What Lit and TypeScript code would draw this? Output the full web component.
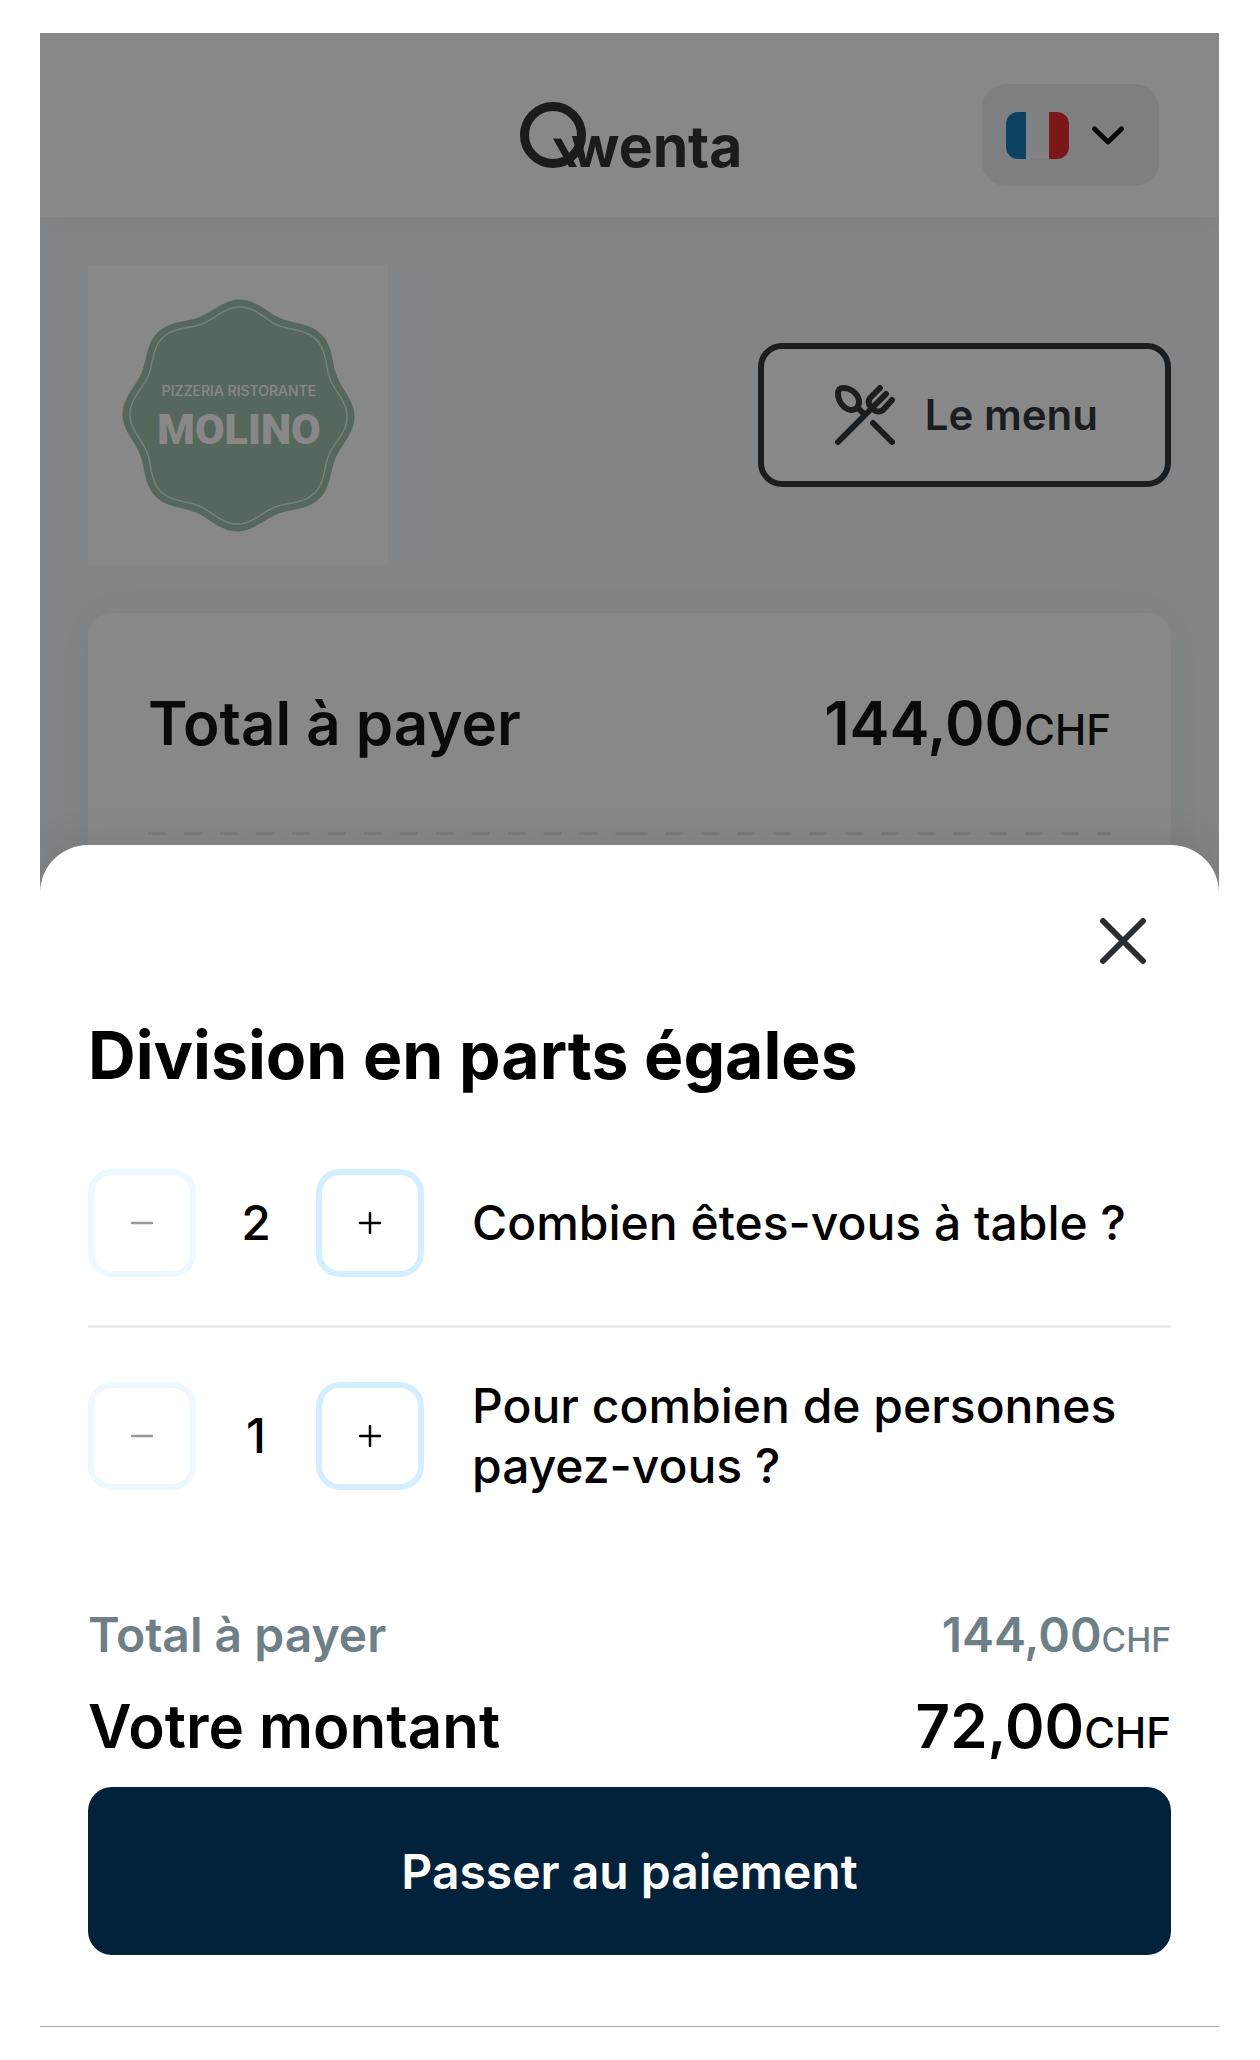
import { LitElement, html, css, svg } from "lit";
import { customElement, property, state } from "lit/decorators.js";

const formatAmount = (value: number) => value.toFixed(2).replace(".", ",");

/** Closed outline of an eight-lobed seal centred on (cx, cy). */
function sealPath(cx: number, cy: number, mean: number, wave: number): string {
  const points: string[] = [];
  for (let deg = 0; deg < 360; deg += 2) {
    const a = (deg * Math.PI) / 180;
    const r = mean + wave * Math.cos(8 * (a - 0.015));
    points.push(`${(cx + r * Math.cos(a)).toFixed(2)} ${(cy + r * Math.sin(a)).toFixed(2)}`);
  }
  return `M${points.join("L")}Z`;
}

@customElement("price-tag")
class PriceTag extends LitElement {
  @property({ type: Number }) amount = 0;

  static styles = css`
    :host { display: inline-block; white-space: nowrap; }
    .currency { font-size: 0.7em; line-height: 1; font-weight: 500; }
  `;

  render() {
    return html`${formatAmount(this.amount)}<span class="currency">CHF</span>`;
  }
}

@customElement("count-stepper")
class CountStepper extends LitElement {
  @property({ type: Number }) value = 1;
  @property({ type: Number }) min = 1;
  @property() label = "";

  static styles = css`
    :host { display: block; }
    .row { display: flex; align-items: center; gap: 48px; }
    .controls { display: flex; align-items: center; flex: none; }
    .step {
      box-sizing: border-box;
      width: 108px;
      height: 108px;
      padding: 0;
      display: grid;
      place-items: center;
      background: #fff;
      border: 6px solid #d3efff;
      border-radius: 24px;
      color: #000;
      cursor: pointer;
    }
    .step:disabled { opacity: 0.4; cursor: default; }
    .count { width: 120px; text-align: center; font-size: 48px; line-height: 60px; }
    .label { flex: 1; font-size: 48px; line-height: 60px; }
  `;

  private change(delta: number) {
    this.dispatchEvent(new CustomEvent("count-change", { detail: this.value + delta }));
  }

  render() {
    return html`
      <div class="row" role="group" aria-labelledby="label">
        <div class="controls">
          <button class="step" aria-label="Moins" ?disabled=${this.value <= this.min} @click=${() => this.change(-1)}>
            <svg width="24" height="24" viewBox="0 0 24 24" fill="none" stroke="currentColor" stroke-width="2.5" stroke-linecap="round"><path d="M2 12H22" /></svg>
          </button>
          <output class="count">${this.value}</output>
          <button class="step" aria-label="Plus" @click=${() => this.change(1)}>
            <svg width="24" height="24" viewBox="0 0 24 24" fill="none" stroke="currentColor" stroke-width="2.5" stroke-linecap="round"><path d="M2 12H22M12 2V22" /></svg>
          </button>
        </div>
        <span class="label" id="label">${this.label}</span>
      </div>
    `;
  }
}

@customElement("app-root")
class AppRoot extends LitElement {
  @state() private total = 144;
  @state() private guests = 2;
  @state() private paying = 1;

  static styles = css`
    :host {
      display: block;
      padding: 33px 41px 33px 40px;
      background: #fff;
      color: #000;
      font-family: Inter, "Liberation Sans", sans-serif;
      font-weight: 500;
    }
    button { font: inherit; }
    .page { position: relative; background: #f1f9fd; overflow: hidden; }
    .veil { position: absolute; inset: 0; background: rgba(19, 19, 19, 0.506); }
    .header {
      display: grid;
      grid-template-columns: 1fr auto 1fr;
      align-items: center;
      padding: 51px 60px 31px;
      background: #fff;
      box-shadow: 0 6px 24px rgba(20, 50, 70, 0.03);
    }
    .brand { grid-column: 2; display: block; }
    .language {
      justify-self: end;
      display: flex;
      align-items: center;
      gap: 20px;
      height: 102px;
      padding: 0 32px 0 24px;
      background: #e9edf1;
      border: 0;
      border-radius: 24px;
      color: #000;
    }
    .icon { display: block; flex: none; }
    .content { display: grid; gap: 48px; padding: 48px 48px 0; }
    .venue { display: flex; align-items: center; justify-content: space-between; }
    .badge { display: block; background: #fff; }
    .menu {
      box-sizing: border-box;
      display: flex;
      align-items: center;
      gap: 30px;
      height: 144px;
      padding: 0 67px 0 71px;
      background: #fff;
      border: 6px solid #22292d;
      border-radius: 24px;
      color: #22292d;
      font-size: 42px;
      line-height: 54px;
      font-weight: 600;
      text-decoration: none;
    }
    .bill {
      padding: 71px 60px 72px;
      background: #fff;
      border-radius: 24px 24px 0 0;
      box-shadow: 0 0 48px rgba(20, 60, 90, 0.05);
    }
    .line { display: flex; justify-content: space-between; align-items: baseline; }
    .large { font-size: 60px; line-height: 72px; font-weight: 600; }
    .muted { font-size: 48px; line-height: 60px; font-weight: 600; color: #6f7f87; }
    .bill .large { line-height: 78px; }
    .dashes {
      height: 3px;
      margin-top: 70px;
      background: repeating-linear-gradient(90deg, #e2e9ec 0 18px, transparent 18px 36px) 0 0 / 50% 100%;
    }
    .sheet {
      position: relative;
      display: flex;
      flex-direction: column;
      margin-top: -62px;
      padding: 48px 48px 71px;
      background: #fff;
      border-bottom: 1px solid #acacac;
      border-radius: 48px 48px 0 0;
      box-shadow: 0 -8px 36px rgba(0, 10, 20, 0.08);
      clip-path: inset(-60px 0 0 0);
    }
    .close {
      align-self: flex-end;
      display: grid;
      place-items: center;
      width: 96px;
      height: 96px;
      padding: 0;
      background: none;
      border: 0;
      color: #2a2e30;
      cursor: pointer;
    }
    .title { margin: 24px 0 72px; font-size: 66px; line-height: 84px; font-weight: 700; }
    .divider { width: 100%; box-sizing: border-box; margin: 48px 0; border: 0; border-top: 3px solid #ebebeb; }
    .totals { display: grid; gap: 25px; margin: 109px 0 25px; }
    .pay {
      height: 168px;
      padding: 0 48px;
      background: #02223b;
      border: 0;
      border-radius: 24px;
      color: #fff;
      font-size: 48px;
      font-weight: 600;
      cursor: pointer;
    }
    .brand-text { font: 700 57px Inter, sans-serif; fill: #242424; }
    .seal-small { font: 500 14px Inter, sans-serif; fill: #fff; }
    .seal-name { font: 900 43px Roboto, sans-serif; fill: #fff; }
  `;

  private setGuests(value: number) {
    this.guests = value;
    this.paying = Math.min(this.paying, value);
  }

  private brand() {
    return html`<svg class="brand" width="232" height="102" viewBox="-6 -17 232 102" role="img" aria-label="Qwenta">
      <circle cx="33" cy="34" r="28.5" fill="none" stroke="#242424" stroke-width="9" />
      <path d="M33 37.500H41L57 66H49Z" fill="#242424" />
      <text class="brand-text" x="51" y="66">wenta</text>
    </svg>`;
  }

  private badge() {
    return html`<svg class="badge" width="300" height="300" viewBox="0 0 300 300" role="img" aria-label="Pizzeria Ristorante Molino">
      ${svg`<path d=${sealPath(150.5, 150.5, 111, 5)} fill="#9abea8" />
      <path d=${sealPath(150.5, 150.5, 103.6, 5)} fill="none" stroke="#e2eee6" stroke-width="1.4" />`}
      <text class="seal-small" x="151" y="131" text-anchor="middle">PIZZERIA RISTORANTE</text>
      <text class="seal-name" x="151" y="179" text-anchor="middle">MOLINO</text>
    </svg>`;
  }

  render() {
    return html`
      <div class="page">
        <header class="header">
          ${this.brand()}
          <button class="language" aria-label="Français">
            <svg class="icon" width="63" height="47" viewBox="0 0 63 47">
              <defs><clipPath id="flag"><rect width="63" height="47" rx="12" /></clipPath></defs>
              <g clip-path="url(#flag)">
                <rect width="63" height="47" fill="#f0f3f7" />
                <rect width="20" height="47" fill="#0871b4" />
                <rect x="43" width="20" height="47" fill="#e51c20" />
              </g>
            </svg>
            <svg class="icon" width="38" height="24" viewBox="0 0 38 24" fill="none" stroke="currentColor" stroke-width="5" stroke-linecap="round" stroke-linejoin="round"><path d="M5.500 6L19 19L32.500 6" /></svg>
          </button>
        </header>
        <div class="content">
          <div class="venue">
            ${this.badge()}
            <a class="menu" href="#menu">
              <svg class="icon" width="60" height="60" viewBox="0 0 60 60" fill="none" stroke="currentColor" stroke-width="6" stroke-linecap="round" stroke-linejoin="round">
                <path d="M3 8C3 5 5 3 8 3C16 3 24 9 24 17C24 22 21 25 16 25C9 24 3 17 3 8Z" />
                <path d="M23 23L28 28M3 57L51 9M38 38L57 57" />
                <path d="M45 3L35 13C33 16 33 19 36 22L39 25C42 27 45 27 48 25L57 15" />
              </svg>
              Le menu
            </a>
          </div>
          <section class="bill">
            <div class="line large"><span>Total à payer</span><price-tag .amount=${this.total}></price-tag></div>
            <div class="dashes"></div>
          </section>
        </div>
        <div class="veil"></div>
      </div>
      <section class="sheet" role="dialog" aria-labelledby="title">
        <button class="close" aria-label="Fermer">
          <svg class="icon" width="48" height="48" viewBox="0 0 48 48" fill="none" stroke="currentColor" stroke-width="6" stroke-linecap="round"><path d="M4 4L44 44M44 4L4 44" /></svg>
        </button>
        <h1 class="title" id="title">Division en parts égales</h1>
        <count-stepper label="Combien êtes-vous à table ?" .min=${2} .value=${this.guests}
          @count-change=${(e: CustomEvent) => this.setGuests(e.detail)}></count-stepper>
        <hr class="divider" />
        <count-stepper label="Pour combien de personnes payez-vous ?" .value=${this.paying}
          @count-change=${(e: CustomEvent) => (this.paying = Math.min(e.detail, this.guests))}></count-stepper>
        <div class="totals">
          <div class="line muted"><span>Total à payer</span><price-tag .amount=${this.total}></price-tag></div>
          <div class="line large"><span>Votre montant</span><price-tag .amount=${(this.total / this.guests) * this.paying}></price-tag></div>
        </div>
        <button class="pay">Passer au paiement</button>
      </section>
    `;
  }
}
